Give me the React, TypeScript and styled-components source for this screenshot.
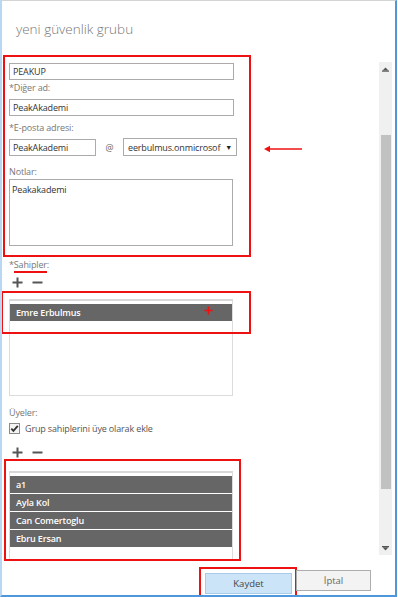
import styled, { createGlobalStyle } from 'styled-components';

const GlobalStyle = createGlobalStyle`
  html, body {
    margin: 0;
    padding: 0;
    background: #ffffff;
  }
  body {
    font-family: 'Open Sans', 'Noto Sans', 'Liberation Sans', sans-serif;
    color: #333333;
  }
`;

const owners = ['Emre Erbulmus'];
const members = ['a1', 'Ayla Kol', 'Can Comertoglu', 'Ebru Ersan'];

const PlusIcon = ({ color = '#555555', size = 11, weight = 2 }: { color?: string; size?: number; weight?: number }) => (
  <svg width={size} height={size} viewBox="0 0 11 11">
    <path d="M5.5 0.5v10M0.5 5.5h10" stroke={color} strokeWidth={weight} fill="none" />
  </svg>
);

const MinusIcon = () => (
  <svg width={11} height={11} viewBox="0 0 11 11">
    <path d="M0.5 5.5h10" stroke="#555555" strokeWidth={2} fill="none" />
  </svg>
);

const ArrowUp = () => (
  <svg width={7} height={5} viewBox="0 0 7 5">
    <path d="M3.5 0.5L6.5 3.5H0.5Z" fill="#555555" />
    <rect x="0" y="3.5" width="7" height="1.2" fill="#555555" />
  </svg>
);

const ArrowDown = () => (
  <svg width={7} height={5} viewBox="0 0 7 5">
    <rect x="0" y="0" width="7" height="1.2" fill="#555555" />
    <path d="M0.5 1.2H6.5L3.5 4.5Z" fill="#555555" />
  </svg>
);

const CheckIcon = () => (
  <svg width={11} height={11} viewBox="0 0 11 11">
    <rect x="0.5" y="0.5" width="10" height="10" fill="#f4f4f4" stroke="#8a8a8a" />
    <path d="M2.3 5.6L4.4 7.8L8.8 2.8" stroke="#333333" strokeWidth={1.8} fill="none" />
  </svg>
);

const App = () => {
  return (
    <>
      <GlobalStyle />
      <Window>
        <Title>yeni güvenlik grubu</Title>
        <Body>
          <Form>
            <Highlight $width={248} $height={202} $pad="6px 0 0 4px" $ml={1} $top={1}>
              <TextInput $width={225} defaultValue="PEAKUP" readOnly />
              <Label $h={19} $pt={0}>*Diğer ad:</Label>
              <TextInput $width={225} defaultValue="PeakAkademi" readOnly />
              <Label $h={22} $pt={4}>*E-posta adresi:</Label>
              <EmailRow>
                <TextInput $width={87} defaultValue="PeakAkademi" readOnly />
                <At>@</At>
                <Select>
                  <SelectText>eerbulmus.onmicrosof</SelectText>
                  <Caret>▼</Caret>
                </Select>
              </EmailRow>
              <Label $h={23} $pt={8}>Notlar:</Label>
              <Notes defaultValue="Peakakademi" readOnly />
            </Highlight>

            <SectionLabel $top={0}>
              *<Marked>Sahipler</Marked>:
            </SectionLabel>
            <Tools $top={2}>
              <PlusIcon />
              <MinusIcon />
            </Tools>
            <ListWrap>
              <List $height={97} $closed>
                {owners.map((name) => (
                  <ListRow key={name}>{name}</ListRow>
                ))}
              </List>
              <OwnerMark />
              <RedPlus>
                <PlusIcon color="#ee1111" size={9} weight={2} />
              </RedPlus>
            </ListWrap>

            <SectionLabel $top={9}>Üyeler:</SectionLabel>
            <CheckRow>
              <CheckIcon />
              <span>Grup sahiplerini üye olarak ekle</span>
            </CheckRow>
            <Tools $top={10}>
              <PlusIcon />
              <MinusIcon />
            </Tools>
            <Highlight $width={237} $height={102} $pad="10px 0 0 3px" $ml={2} $top={0}>
              <List $height={88}>
                {members.map((name) => (
                  <ListRow key={name}>{name}</ListRow>
                ))}
              </List>
            </Highlight>
          </Form>
          <Scrollbar>
            <ScrollArrow>
              <ArrowUp />
            </ScrollArrow>
            <ScrollTrack>
              <Thumb style={{ marginTop: 59, height: 354 }} />
            </ScrollTrack>
            <ScrollArrow>
              <ArrowDown />
            </ScrollArrow>
          </Scrollbar>
        </Body>
        <Footer>
          <SaveMark>
            <PrimaryButton>Kaydet</PrimaryButton>
          </SaveMark>
          <Button>İptal</Button>
        </Footer>
        <PointerArrow>
          <svg width={40} height={8} viewBox="0 0 40 8">
            <path d="M4 4H38" stroke="#ee1111" strokeWidth={1.6} />
            <path d="M0 4L6 0.8V7.2Z" fill="#ee1111" />
          </svg>
        </PointerArrow>
      </Window>
    </>
  );
};

const Window = styled.div`
  position: relative;
  box-sizing: border-box;
  width: 397px;
  height: 597px;
  display: flex;
  flex-direction: column;
  border-left: 2px solid #b7d7f2;
  border-right: 2px solid #4f97dd;
  border-top: 1px solid #d4d4d4;
  border-bottom: 2px solid #4f97dd;
  background: #ffffff;
  overflow: hidden;
`;

const Title = styled.div`
  flex-shrink: 0;
  height: 53px;
  box-sizing: border-box;
  padding: 19px 0 0 14px;
  font-size: 13.5px;
  font-weight: 300;
  color: #777777;
`;

const Body = styled.div`
  flex-shrink: 0;
  display: flex;
  height: 507px;
`;

const Form = styled.div`
  width: 375px;
  overflow: hidden;
  font-size: 9px;
  letter-spacing: -0.15px;
`;

const Highlight = styled.div<{ $width: number; $height: number; $pad: string; $ml: number; $top?: number }>`
  box-sizing: border-box;
  width: ${(p) => p.$width}px;
  height: ${(p) => p.$height}px;
  margin-left: ${(p) => p.$ml}px;
  margin-top: ${(p) => p.$top ?? 0}px;
  padding: ${(p) => p.$pad};
  border: 2px solid #ee1111;
`;

const TextInput = styled.input<{ $width: number }>`
  display: block;
  box-sizing: border-box;
  width: ${(p) => p.$width}px;
  height: 17px;
  margin: 0;
  padding: 0 3px;
  border: 1px solid #ababab;
  font-family: inherit;
  font-size: 9px;
  letter-spacing: -0.15px;
  color: #333333;
  background: #ffffff;
  outline: none;
`;

const Label = styled.div<{ $h: number; $pt: number }>`
  box-sizing: border-box;
  height: ${(p) => p.$h}px;
  padding-top: ${(p) => p.$pt}px;
  line-height: 16px;
  color: #777777;
`;

const EmailRow = styled.div`
  display: flex;
  align-items: center;
  height: 18px;
`;

const At = styled.span`
  width: 27px;
  text-align: center;
  color: #666666;
`;

const Select = styled.div`
  box-sizing: border-box;
  width: 114px;
  height: 18px;
  display: flex;
  align-items: center;
  gap: 4px;
  padding: 0 4px;
  border: 1px solid #ababab;
  color: #333333;
  white-space: nowrap;
`;

const SelectText = styled.span`
  flex: 1;
  min-width: 0;
  overflow: hidden;
`;

const Caret = styled.span`
  font-size: 7px;
  color: #222222;
`;

const Notes = styled.textarea`
  display: block;
  box-sizing: border-box;
  width: 224px;
  height: 67px;
  margin: 0;
  padding: 3px 2px;
  border: 1px solid #ababab;
  resize: none;
  font-family: inherit;
  font-size: 9px;
  letter-spacing: -0.15px;
  color: #333333;
  outline: none;
`;

const SectionLabel = styled.div<{ $top?: number }>`
  margin: ${(p) => p.$top ?? 0}px 0 0 7px;
  height: 16px;
  line-height: 16px;
  color: #777777;
`;

const Marked = styled.span`
  border-bottom: 2px solid #ee1111;
`;

const Tools = styled.div<{ $top?: number }>`
  display: flex;
  gap: 9px;
  margin: ${(p) => p.$top ?? 2}px 0 0 10px;
  height: 14px;
  align-items: center;
`;

const ListWrap = styled.div`
  position: relative;
  margin: 10px 0 0 7px;
  width: 224px;
`;

const List = styled.div<{ $height: number; $closed?: boolean }>`
  box-sizing: border-box;
  height: ${(p) => p.$height}px;
  width: 224px;
  padding-top: 3px;
  border: 1px solid #dcdcdc;
  border-top: 2px solid #d8d8d8;
  border-bottom: ${(p) => (p.$closed ? '1px solid #dcdcdc' : 'none')};
  display: flex;
  flex-direction: column;
  gap: 1px;
`;

const ListRow = styled.div`
  height: 17px;
  line-height: 17px;
  padding-left: 6px;
  background: #666666;
  color: #ffffff;
  font-weight: 600;
`;

const OwnerMark = styled.div`
  position: absolute;
  left: -8px;
  top: -8px;
  width: 250px;
  height: 43px;
  box-sizing: border-box;
  border: 2px solid #ee1111;
`;

const RedPlus = styled.div`
  position: absolute;
  left: 195px;
  top: 7px;
  display: flex;
`;

const CheckRow = styled.div`
  display: flex;
  align-items: center;
  gap: 5px;
  margin: 0 0 0 7px;
  height: 14px;
  color: #555555;
`;

const Scrollbar = styled.div`
  width: 13px;
  margin: 8px 0 0 2px;
  height: 493px;
  display: flex;
  flex-direction: column;
  background: #f0f0f0;
`;

const ScrollArrow = styled.div`
  height: 14px;
  display: flex;
  align-items: center;
  justify-content: center;
`;

const ScrollTrack = styled.div`
  flex: 1;
  display: flex;
  flex-direction: column;
  align-items: center;
`;

const Thumb = styled.div`
  width: 10px;
  background: #c1c1c1;
`;

const Footer = styled.div`
  flex-shrink: 0;
  display: flex;
  align-items: flex-start;
  padding: 6px 0 0 197px;
`;

const SaveMark = styled.div`
  box-sizing: border-box;
  padding: 1px 3px 1px 4px;
  border: 2px solid #ee1111;
`;

const Button = styled.button`
  box-sizing: border-box;
  width: 75px;
  height: 21px;
  margin: 3px 0 0 -1px;
  padding: 0;
  border: 1px solid #adadad;
  background: #f3f3f3;
  font-family: inherit;
  font-size: 9.5px;
  color: #666666;
`;

const PrimaryButton = styled(Button)`
  width: 87px;
  margin: 0;
  background: #cce4f7;
  border-color: #a8cbe8;
  color: #444444;
`;

const PointerArrow = styled.div`
  position: absolute;
  left: 262px;
  top: 144px;
  display: flex;
`;

export default App;
